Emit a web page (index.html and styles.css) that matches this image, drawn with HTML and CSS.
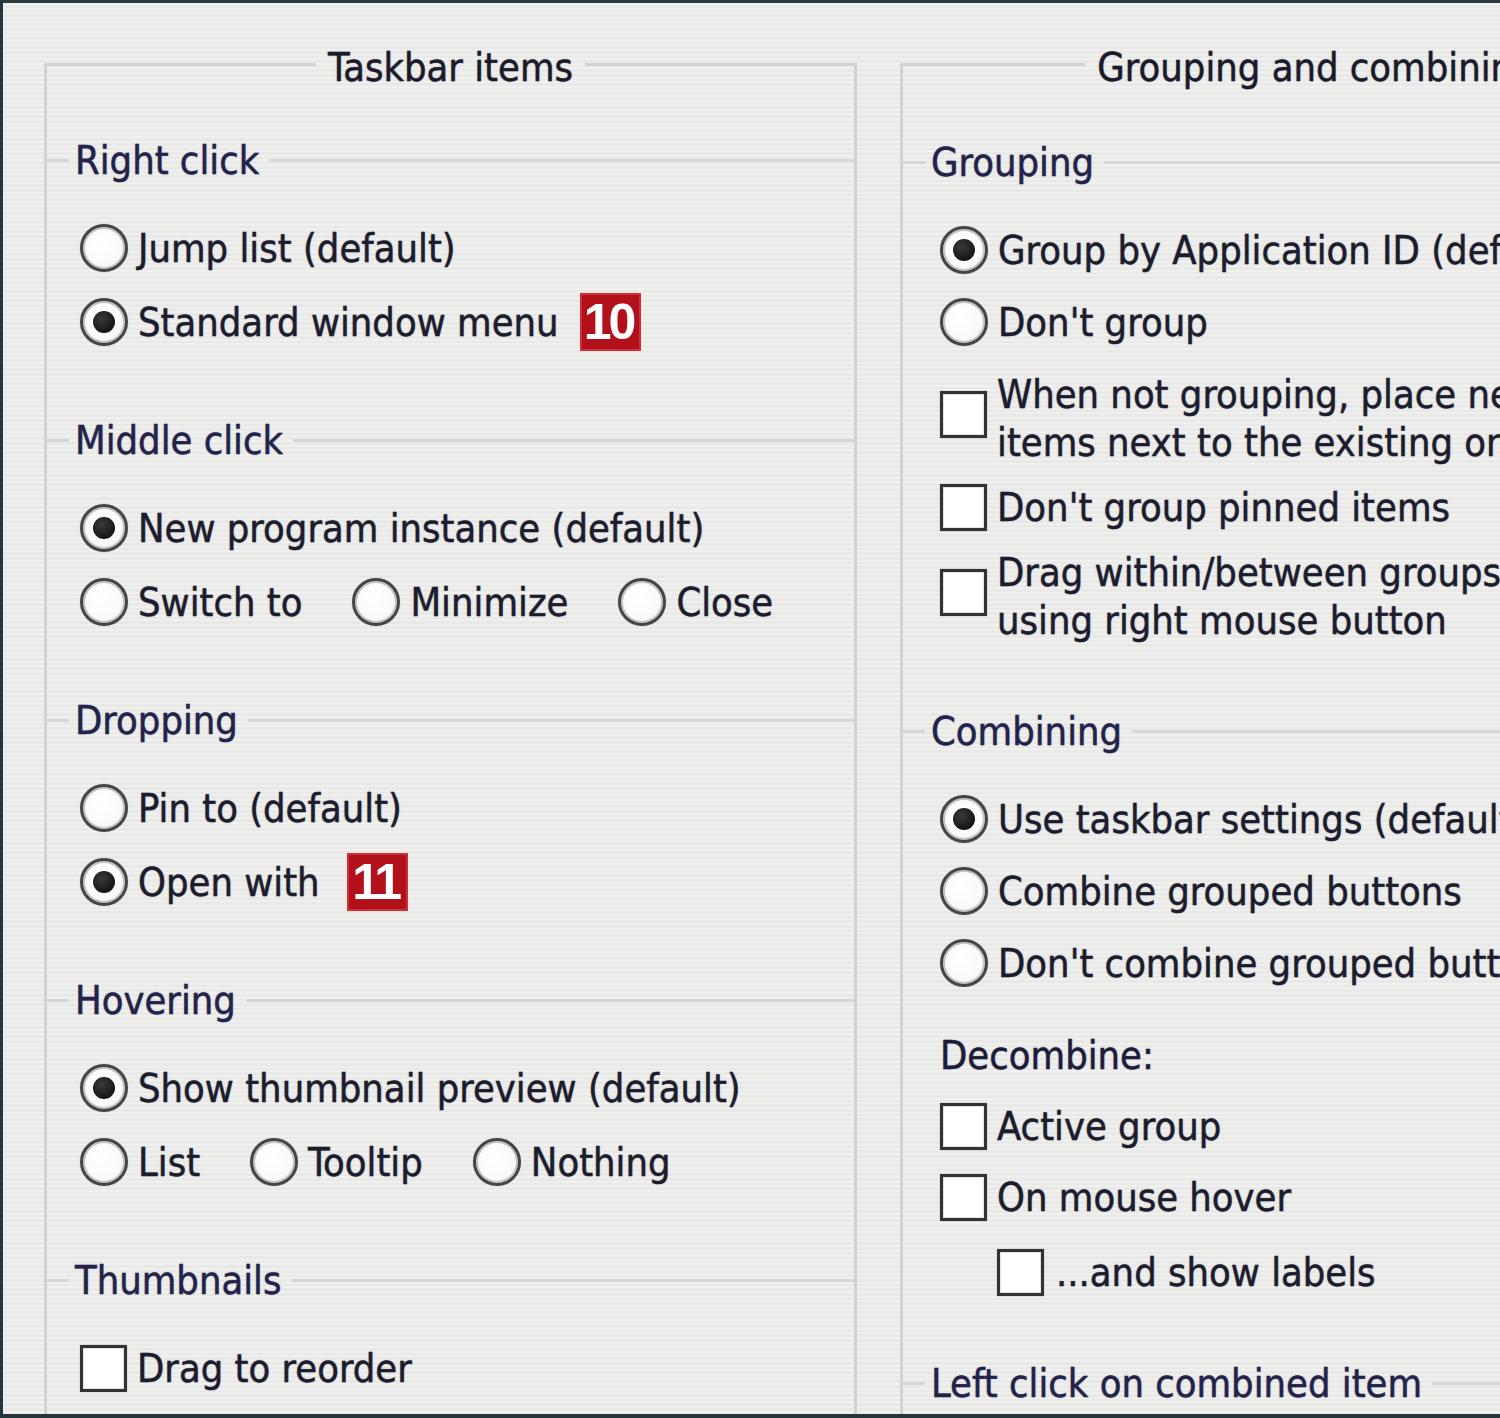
FILE: index.html
```html
<!DOCTYPE html>
<html lang="en">
<head>
<meta charset="utf-8">
<title>Taskbar items</title>
<link rel="stylesheet" href="styles.css">
</head>
<body>
<div class="window">
  <div class="group group-left">
    <div class="group-title"><span>Taskbar items</span></div>
    <div class="group-body">
      <section class="sect">
        <div class="sect-title"><span>Right click</span></div>
        <div class="rows">
          <div class="opt"><span class="radio"></span><span class="txt">Jump list (default)</span></div>
          <div class="opt"><span class="radio on"></span><span class="txt">Standard window menu</span><span class="badge">10</span></div>
        </div>
      </section>
      <section class="sect">
        <div class="sect-title"><span>Middle click</span></div>
        <div class="rows">
          <div class="opt"><span class="radio on"></span><span class="txt">New program instance (default)</span></div>
          <div class="inline">
            <div class="opt"><span class="radio"></span><span class="txt">Switch to</span></div>
            <div class="opt"><span class="radio"></span><span class="txt">Minimize</span></div>
            <div class="opt"><span class="radio"></span><span class="txt">Close</span></div>
          </div>
        </div>
      </section>
      <section class="sect">
        <div class="sect-title"><span>Dropping</span></div>
        <div class="rows">
          <div class="opt"><span class="radio"></span><span class="txt">Pin to (default)</span></div>
          <div class="opt"><span class="radio on"></span><span class="txt">Open with</span><span class="badge badge-wide">11</span></div>
        </div>
      </section>
      <section class="sect">
        <div class="sect-title"><span>Hovering</span></div>
        <div class="rows">
          <div class="opt"><span class="radio on"></span><span class="txt">Show thumbnail preview (default)</span></div>
          <div class="inline">
            <div class="opt"><span class="radio"></span><span class="txt">List</span></div>
            <div class="opt"><span class="radio"></span><span class="txt">Tooltip</span></div>
            <div class="opt"><span class="radio"></span><span class="txt">Nothing</span></div>
          </div>
        </div>
      </section>
      <section class="sect">
        <div class="sect-title"><span>Thumbnails</span></div>
        <div class="rows">
          <div class="opt"><span class="check"></span><span class="txt">Drag to reorder</span></div>
        </div>
      </section>
    </div>
  </div>

  <div class="group group-right">
    <div class="group-title"><span>Grouping and combining</span></div>
    <div class="group-body">
      <section class="sect">
        <div class="sect-title"><span>Grouping</span></div>
        <div class="rows">
          <div class="opt"><span class="radio on"></span><span class="txt">Group by Application ID (default)</span></div>
          <div class="opt"><span class="radio"></span><span class="txt">Don't group</span></div>
          <div class="subrows">
            <div class="opt multi"><span class="check"></span><span class="txt">When not grouping, place new<br>items next to the existing ones</span></div>
            <div class="opt"><span class="check"></span><span class="txt">Don't group pinned items</span></div>
            <div class="opt multi"><span class="check"></span><span class="txt">Drag within/between groups<br>using right mouse button</span></div>
          </div>
        </div>
      </section>
      <section class="sect">
        <div class="sect-title"><span>Combining</span></div>
        <div class="rows">
          <div class="opt"><span class="radio on"></span><span class="txt">Use taskbar settings (default)</span></div>
          <div class="opt"><span class="radio"></span><span class="txt">Combine grouped buttons</span></div>
          <div class="opt"><span class="radio"></span><span class="txt">Don't combine grouped buttons</span></div>
          <div class="subblock">
            <div class="plain-label">Decombine:</div>
            <div class="opt"><span class="check"></span><span class="txt">Active group</span></div>
            <div class="opt"><span class="check"></span><span class="txt">On mouse hover</span></div>
            <div class="opt indent"><span class="check"></span><span class="txt">...and show labels</span></div>
          </div>
        </div>
      </section>
      <section class="sect">
        <div class="sect-title"><span>Left click on combined item</span></div>
      </section>
    </div>
  </div>
</div>
</body>
</html>
```

FILE: styles.css
```css
* { box-sizing: border-box; }

html, body {
  margin: 0;
  padding: 0;
  width: 1500px;
  height: 1418px;
  overflow: hidden;
}

body {
  font-family: "DejaVu Sans Condensed", "DejaVu Sans", sans-serif;
  font-stretch: condensed;
  font-size: 39.5px;
  color: #1c1c2c;
  background: #ececea;
}

.window {
  width: 1500px;
  height: 1418px;
  border-top: 3px solid #2a3b3c;
  border-left: 3px solid #22363f;
  border-bottom: 4px solid #27343a;
  padding: 39px 0 0 41px;
  display: flex;
  gap: 43px;
  overflow: hidden;
  background:
    repeating-linear-gradient(180deg, #f0f0ee 0px, #f0f0ee 2px, #e9eae8 2px, #e9eae8 4.6px);
}

.txt, .group-title span, .sect-title span, .plain-label {
  text-shadow: 0 0 1.5px rgba(40, 40, 80, 0.45);
  -webkit-text-stroke: 0.35px currentColor;
  white-space: nowrap;
}

/* ---------- group boxes ---------- */
.group {
  width: 813px;
  flex-shrink: 0;
  display: flex;
  flex-direction: column;
}

.group-right { width: 833px; }

.group-title {
  display: flex;
  height: 50px;
  line-height: 50px;
}

.group-title span {
  padding: 0 12px;
  color: #1a1a28;
}

.group-title::before,
.group-title::after {
  content: "";
  flex: 1;
  height: 26px;
  align-self: flex-end;
  border-top: 3px solid #d2d2d0;
}

.group-title::before { border-left: 3px solid #d2d2d0; }
.group-title::after { border-right: 3px solid #d2d2d0; }

.group-body {
  flex: 1;
  border-left: 3px solid #d2d2d0;
  border-right: 3px solid #d2d2d0;
  display: flex;
  flex-direction: column;
  gap: 69px;
  padding-top: 43px;
}

.group-right .group-body {
  gap: 62px;
  padding-top: 45px;
}

/* ---------- sections ---------- */
.sect-title {
  display: flex;
  align-items: center;
  height: 50px;
  line-height: 50px;
  color: #22224a;
}

.sect-title::before {
  content: "";
  width: 22px;
  height: 3px;
  background: #d6d6d4;
}

.sect-title span { padding: 0 10px 0 6px; }

.sect-title::after {
  content: "";
  flex: 1;
  height: 3px;
  background: #d6d6d4;
}

.rows {
  display: flex;
  flex-direction: column;
  gap: 26px;
  margin-top: 39px;
  padding-left: 33px;
}

.group-right .rows {
  gap: 24px;
  padding-left: 37px;
}

.subrows {
  display: flex;
  flex-direction: column;
  gap: 17px;
}

.subblock {
  display: flex;
  flex-direction: column;
  gap: 23px;
  margin-top: 20px;
}

.plain-label {
  line-height: 48px;
  color: #1c1c3a;
}

/* ---------- options ---------- */
.opt {
  display: flex;
  align-items: center;
  gap: 10px;
  line-height: 48px;
}

.inline {
  display: flex;
  gap: 50px;
}

.radio {
  width: 48px;
  height: 48px;
  flex-shrink: 0;
  border-radius: 50%;
  border: 3px solid #454545;
  background: radial-gradient(circle at 40% 35%, #ffffff 0%, #fafafa 60%, #ececec 100%);
  box-shadow: inset 0 0 0 2px #c4c4c4, 0 0 1px rgba(0, 0, 0, 0.4);
  display: flex;
  align-items: center;
  justify-content: center;
}

.radio.on::after {
  content: "";
  width: 22px;
  height: 22px;
  border-radius: 50%;
  background: radial-gradient(circle at 40% 35%, #3a3a3a 0%, #151515 70%);
}

.check {
  width: 47px;
  height: 47px;
  flex-shrink: 0;
  border: 3px solid #333333;
  background: #ffffff;
  box-shadow: inset 0 0 0 1px #e2e2e2, 0 0 1px rgba(0, 0, 0, 0.4);
}

.opt.multi { align-items: flex-start; }
.opt.multi .check { margin-top: 21px; }

.indent {
  margin-left: 57px;
  margin-top: 4px;
  gap: 12px;
}

/* ---------- numbered badges ---------- */
.badge {
  width: 61px;
  height: 58px;
  margin: -5px 0 -5px 11px;
  background: #b2111c;
  border: 2px solid #cf3038;
  color: #ffffff;
  font-family: "Liberation Sans", Arial, sans-serif;
  font-weight: bold;
  font-size: 50px;
  letter-spacing: -3px;
  line-height: 54px;
  text-align: center;
  padding-right: 3px;
}

.badge-wide { margin-left: 17px; }
```
